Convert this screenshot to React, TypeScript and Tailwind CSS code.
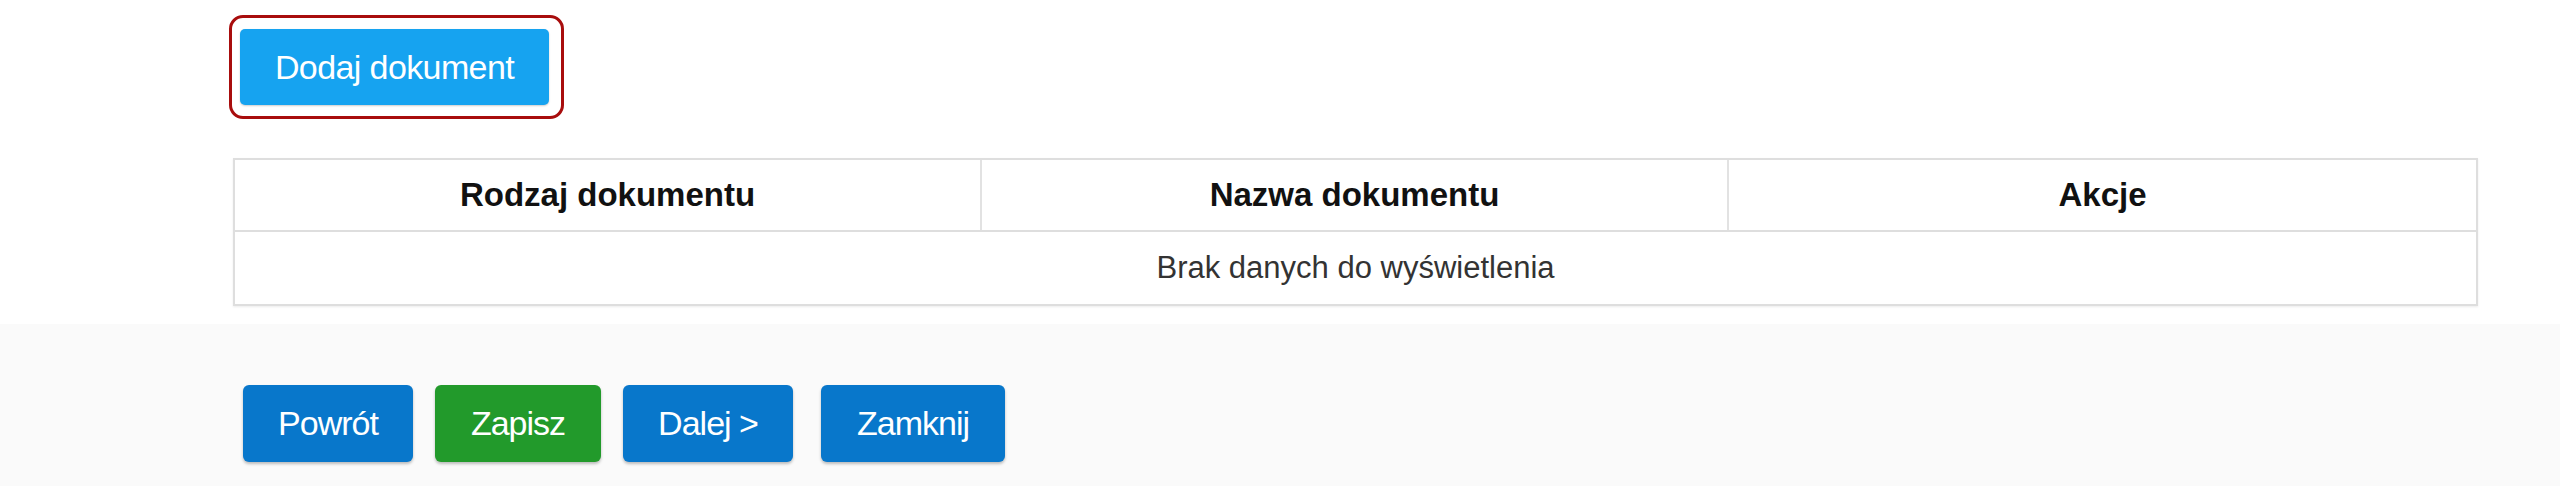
import React from "react";

const font = "font-['Liberation_Sans',Arial,sans-serif]";

function BottomButton({ label, color, width, extra = "" }: { label: string; color: string; width: string; extra?: string }) {
  return (
    <button
      className={`${color} ${width} ${extra} h-[77px] rounded-[6px] text-white text-[34px] tracking-[-1px] flex items-center justify-center shadow-[0_2px_3px_rgba(0,0,0,0.25)]`}
    >
      {label}
    </button>
  );
}

export default function App() {
  return (
    <div className={`w-[2560px] h-[486px] overflow-hidden bg-white ${font}`}>
      <div className="h-[324px] bg-white pt-[15px] pl-[229px] flex flex-col items-start">
        <div className="border-[3px] border-[#a80d0d] rounded-[14px] pt-[11px] pb-[11px] pl-[8px] pr-[12px]">
          <button className="w-[309px] h-[76px] bg-[#16a3f0] rounded-[5px] text-white text-[34px] tracking-[-0.6px] flex items-center justify-center shadow-[0_1px_2px_rgba(0,0,0,0.2)]">
            Dodaj dokument
          </button>
        </div>
        <div className="mt-[39px] ml-[4px] w-[2245px] border-2 border-[#dedede] shadow-[0_1px_2px_rgba(0,0,0,0.08)]">
          <div className="grid grid-cols-3 h-[72px] border-b-2 border-[#dedede]">
            <div className="flex items-center justify-center border-r-2 border-[#e2e2e2] text-[33px] font-bold text-[#111]">
              Rodzaj dokumentu
            </div>
            <div className="flex items-center justify-center border-r-2 border-[#e2e2e2] text-[33px] font-bold text-[#111]">
              Nazwa dokumentu
            </div>
            <div className="flex items-center justify-center text-[33px] font-bold text-[#111]">
              Akcje
            </div>
          </div>
          <div className="h-[72px] flex items-center justify-center text-[31px] text-[#333]">
            Brak danych do wyświetlenia
          </div>
        </div>
      </div>
      <div className="h-[162px] bg-[#fafafa] pt-[61px] pl-[243px] flex items-start gap-[22px]">
        <BottomButton label="Powrót" color="bg-[#0877cb]" width="w-[170px]" />
        <BottomButton label="Zapisz" color="bg-[#229a2b]" width="w-[166px]" />
        <BottomButton label="Dalej >" color="bg-[#0877cb]" width="w-[170px]" />
        <BottomButton label="Zamknij" color="bg-[#0877cb]" width="w-[184px]" extra="ml-[6px]" />
      </div>
    </div>
  );
}
